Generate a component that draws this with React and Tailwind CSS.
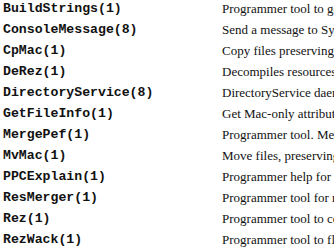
export default function App() {
  const rows = [
    ["BuildStrings(1)", "Programmer tool to generate localized strings"],
    ["ConsoleMessage(8)", "Send a message to System Log"],
    ["CpMac(1)", "Copy files preserving metadata and forks"],
    ["DeRez(1)", "Decompiles resources"],
    ["DirectoryService(8)", "DirectoryService daemon"],
    ["GetFileInfo(1)", "Get Mac-only attributes of files"],
    ["MergePef(1)", "Programmer tool. Merges PEF files"],
    ["MvMac(1)", "Move files, preserving metadata and forks"],
    ["PPCExplain(1)", "Programmer help for PowerPC mnemonics"],
    ["ResMerger(1)", "Programmer tool for resource merging"],
    ["Rez(1)", "Programmer tool to compile resources"],
    ["RezWack(1)", "Programmer tool to flatten resource files"],
  ];
  return (
    <div className="w-[334px] h-[250px] overflow-hidden bg-white text-black">
      <div className="flex flex-col -mt-[2px]">
        {rows.map(([a, b]) => (
          <div key={a} className="flex h-[21px] items-center whitespace-nowrap">
            <div className="w-[219px] shrink-0 pl-[3px] font-bold text-[13.2px] font-['Liberation_Mono',monospace] text-[#111]">
              {a}
            </div>
            <div className="pl-[3px] text-[13px] font-['Liberation_Serif',serif] text-[#111]">{b}</div>
          </div>
        ))}
      </div>
    </div>
  );
}
